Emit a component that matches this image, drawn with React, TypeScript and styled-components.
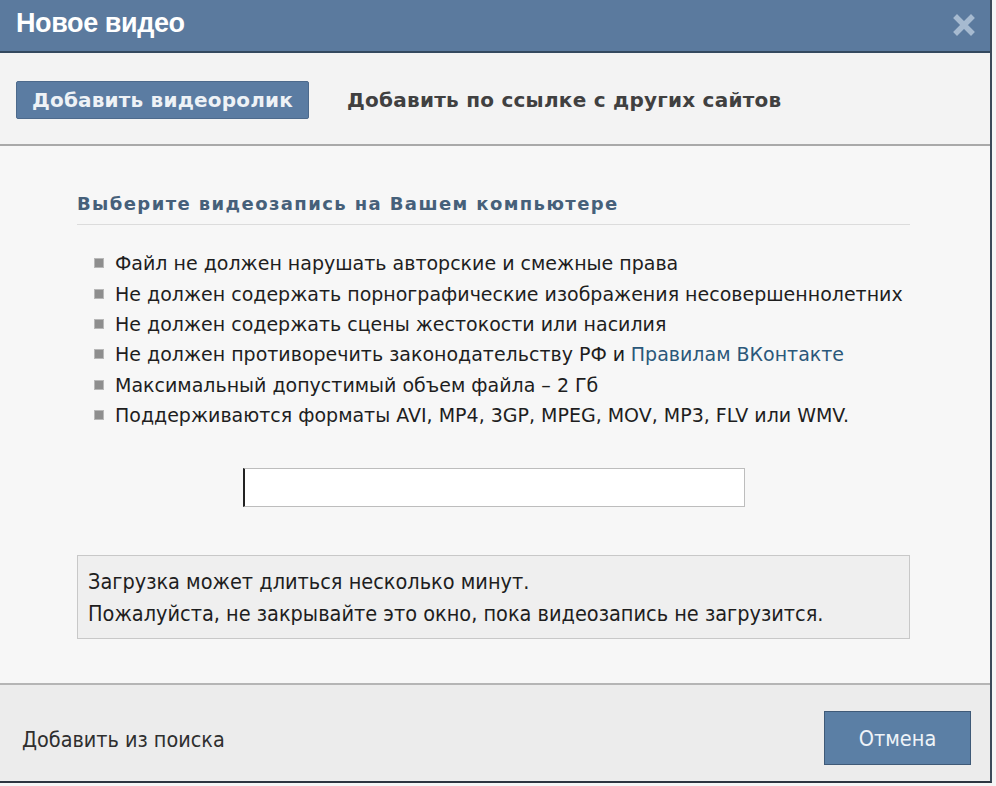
import React from 'react'
import styled, { createGlobalStyle } from 'styled-components'

const GlobalStyle = createGlobalStyle`
  html, body {
    margin: 0;
    padding: 0;
    background: #f5f5f5;
  }
  body {
    font-family: "DejaVu Sans", "Liberation Sans", sans-serif;
  }
`

const rules = [
  'Файл не должен нарушать авторские и смежные права',
  'Не должен содержать порнографические изображения несовершеннолетних',
  'Не должен содержать сцены жестокости или насилия',
  null,
  'Максимальный допустимый объем файла – 2 Гб',
  'Поддерживаются форматы AVI, MP4, 3GP, MPEG, MOV, MP3, FLV или WMV.',
]

const App: React.FC = () => {
  return (
    <>
      <GlobalStyle />
      <Dialog>
        <Header>
          <Title>Новое видео</Title>
          <CloseButton aria-label="close">
            <svg width="22" height="22" viewBox="0 0 22 22">
              <path d="M4 4 L18 18 M18 4 L4 18" stroke="#a6bad0" strokeWidth="5.5" strokeLinecap="square" />
            </svg>
          </CloseButton>
        </Header>
        <Tabs>
          <ActiveTab>Добавить видеоролик</ActiveTab>
          <Tab>Добавить по ссылке с других сайтов</Tab>
        </Tabs>
        <Body>
          <SectionTitle>Выберите видеозапись на Вашем компьютере</SectionTitle>
          <RuleList>
            {rules.map((r, i) => (
              <RuleItem key={i}>
                {r ?? (
                  <>
                    Не должен противоречить законодательству РФ и <RuleLink>Правилам ВКонтакте</RuleLink>
                  </>
                )}
              </RuleItem>
            ))}
          </RuleList>
          <FileRow>
            <FileInput />
          </FileRow>
          <InfoBox>
            <div>Загрузка может длиться несколько минут.</div>
            <div>Пожалуйста, не закрывайте это окно, пока видеозапись не загрузится.</div>
          </InfoBox>
        </Body>
        <Footer>
          <FooterLink>Добавить из поиска</FooterLink>
          <CancelButton>Отмена</CancelButton>
        </Footer>
      </Dialog>
    </>
  )
}
export default App

const Dialog = styled.div`
  width: 992px;
  height: 783px;
  display: flex;
  flex-direction: column;
  border-right: 2px solid #3c4a59;
  border-bottom: 2px solid #2d3540;
  background: #f7f7f7;
  box-sizing: border-box;
`

const Header = styled.div`
  height: 53px;
  flex-shrink: 0;
  background: #5b7a9e;
  border-bottom: 2px solid #34495f;
  box-sizing: border-box;
  display: flex;
  align-items: center;
  justify-content: space-between;
  padding: 0 15px 4px 16px;
`

const Title = styled.div`
  color: #ffffff;
  font-family: "Liberation Sans", sans-serif;
  font-weight: bold;
  font-size: 27px;
  letter-spacing: -0.4px;
`

const CloseButton = styled.div`
  width: 22px;
  height: 22px;
  margin-top: 2px;
`

const Tabs = styled.div`
  height: 93px;
  flex-shrink: 0;
  background: #f3f3f3;
  border-bottom: 2px solid #a9a9a9;
  box-sizing: border-box;
  display: flex;
  align-items: center;
  gap: 38px;
  padding: 0 0 0 16px;
`

const ActiveTab = styled.div`
  width: 293px;
  height: 38px;
  box-sizing: border-box;
  background: #5b7ca2;
  border: 1px solid #4d6a8c;
  border-radius: 2px;
  color: #eef2f6;
  font-weight: bold;
  font-size: 20px;
  letter-spacing: 0.2px;
  display: flex;
  align-items: center;
  justify-content: center;
  margin-top: 2px;
`

const Tab = styled.div`
  color: #404040;
  font-size: 20px;
  font-weight: bold;
  letter-spacing: 0.25px;
  margin-top: 2px;
`

const Body = styled.div`
  flex: 1;
  background: #f7f7f7;
  padding: 47px 80px 0 77px;
  border-bottom: 2px solid #b5b5b5;
`

const SectionTitle = styled.div`
  color: #46607a;
  font-weight: bold;
  font-size: 18px;
  letter-spacing: 1.4px;
  padding-bottom: 10px;
  border-bottom: 1px solid #dcdcdc;
`

const RuleList = styled.ul`
  list-style: none;
  margin: 23px 0 0 0;
  padding: 0 0 0 17px;
`

const RuleItem = styled.li`
  display: flex;
  align-items: center;
  height: 30.4px;
  color: #1e1e1e;
  font-size: 19px;
  white-space: nowrap;

  &::before {
    content: '';
    width: 8px;
    height: 8px;
    background: #8e8e8e;
    border: 1px solid #b8b8b8;
    margin-right: 11px;
    flex-shrink: 0;
  }
`

const RuleLink = styled.span`
  color: #2b587a;
  margin-left: 0.3em;
`

const FileRow = styled.div`
  display: flex;
  padding: 38px 0 0 166px;
`

const FileInput = styled.div`
  width: 502px;
  height: 39px;
  box-sizing: border-box;
  background: #ffffff;
  border: 1px solid #bdbdbd;
  border-left: 2px solid #222;
`

const InfoBox = styled.div`
  margin-top: 48px;
  height: 84px;
  box-sizing: border-box;
  background: #efefef;
  border: 1px solid #c8c8c8;
  padding: 10px 10px 0 10px;
  font-family: "DejaVu Sans Condensed", "Liberation Sans", sans-serif;
  font-size: 21.5px;
  color: #1e1e1e;
  line-height: 32px;
`

const Footer = styled.div`
  height: 96px;
  flex-shrink: 0;
  background: #ececec;
  display: flex;
  align-items: center;
  justify-content: space-between;
  padding: 0 19px 0 22px;
`

const FooterLink = styled.div`
  color: #2f2f2f;
  font-family: "DejaVu Sans Condensed", "Liberation Sans", sans-serif;
  font-size: 21.4px;
  margin-top: 12px;
`

const CancelButton = styled.div`
  width: 147px;
  height: 54px;
  box-sizing: border-box;
  background: #5b7fa5;
  border: 1px solid #3f5a78;
  color: #eef3f8;
  font-family: "DejaVu Sans Condensed", "Liberation Sans", sans-serif;
  font-size: 21.5px;
  display: flex;
  align-items: center;
  justify-content: center;
  margin-top: 10px;
`
